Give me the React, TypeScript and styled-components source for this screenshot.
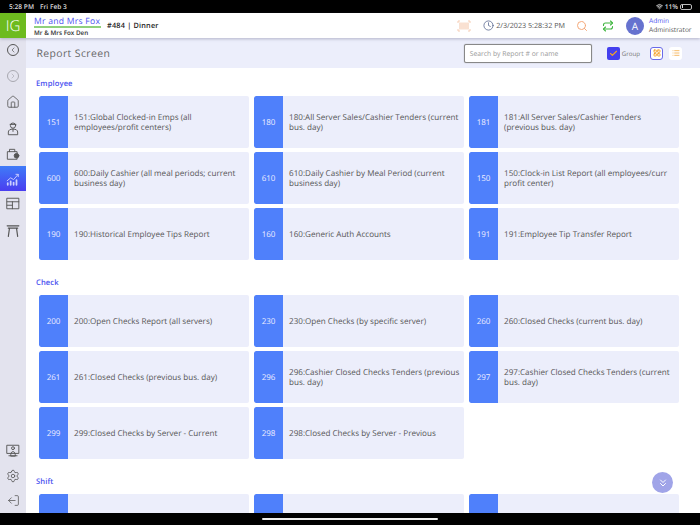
import React from "react";
import styled, { createGlobalStyle } from "styled-components";
import { ChevronsDown, Check as CheckIcon, Search, Repeat, Clock, Home, Settings, LogOut, ChevronLeft, ChevronRight, LayoutGrid, List, Wifi } from "lucide-react";

const Global = createGlobalStyle`
  html, body { margin: 0; padding: 0; width: 700px; height: 525px; overflow: hidden; background: #fff; }
  * { box-sizing: border-box; }
  body { font-family: "Open Sans", "Noto Sans", sans-serif; color: #555; text-rendering: geometricPrecision; }
`;
const Page = styled.div`
  position: relative; width: 700px; height: 525px; display: flex; flex-direction: column; overflow: hidden;
`;
const StatusBar = styled.div`
  height: 13px; flex: none; background: #000; color: #ddd; font-size: 6.6px; display: flex; align-items: center;
  padding: 0 8px 0 9px; font-weight: 600;
`;
const StatusTime = styled.span`margin-right: 6px;`;
const StatusRight = styled.div`margin-left: auto; display: flex; align-items: center; gap: 2px;`;
const Battery = styled.span`
  width: 12px; height: 6px; border: 1px solid #bbb; border-radius: 2px; display: block; padding: 0.5px;
  &::before { content: ""; display: block; width: 1.5px; height: 100%; background: #ddd; }
`;
const Header = styled.header`
  height: 25px; flex: none; background: #fff; display: flex; align-items: center; position: relative; z-index: 2;
  box-shadow: 0 1px 3px rgba(70,70,110,.35);
`;
const Logo = styled.div`
  width: 26px; height: 25px; background: #6dbb1f; color: #fff; font-size: 15px; font-weight: 300; display: flex; align-items: center; justify-content: center;
`;
const Brand = styled.div`width: 67px; margin-left: 8px; display: flex; flex-direction: column;`;
const BrandName = styled.div`
  color: #4b52f0; font-size: 8.6px; line-height: 10px; letter-spacing: .25px; border-bottom: 2px solid #8fd07c; white-space: nowrap;
`;
const BrandSub = styled.div`color: #333; font-size: 6.3px; line-height: 7px; font-weight: 600; white-space: nowrap; margin-top: 1px;`;
const OrderInfo = styled.div`margin-left: 6px; color: #222; font-size: 7.3px; font-weight: 600; letter-spacing: .2px;`;
const HeaderRight = styled.div`margin-left: auto; display: flex; align-items: center; height: 100%;`;
const DateText = styled.span`color: #555; font-size: 7.2px; margin-left: 2px; white-space: nowrap;`;
const DateBlock = styled.div`display: flex; align-items: center; margin-left: 12px; color: #4a5a86;`;
const SearchSlot = styled.div`display: flex; margin-left: 11px; color: #f5a878;`;
const SyncSlot = styled.div`display: flex; margin-left: 14px; color: #3fb53f;`;
const Avatar = styled.div`
  width: 18px; height: 18px; border-radius: 50%; background: #6672cf; color: #fff; font-size: 10px; display: flex; align-items: center; justify-content: center; margin-left: 12px;
`;
const User = styled.div`margin: 0 8px 0 5px; width: 43px;`;
const UserName = styled.div`color: #4b52f0; font-size: 6.6px; line-height: 8px;`;
const UserRole = styled.div`color: #555; font-size: 6.6px; line-height: 9px;`;
const Body = styled.div`flex: 1; display: flex; min-height: 0;`;
const Sidebar = styled.nav`
  width: 26px; flex: none; background: #e3e3ee; display: flex; flex-direction: column; align-items: center;
`;
const NavSlot = styled.div<{ $h: number; $active?: boolean; $dim?: boolean }>`
  width: 26px; height: ${p => p.$h}px; flex: none; display: flex; align-items: center; justify-content: center;
  color: ${p => p.$active ? "#cdd0ff" : p.$dim ? "#a8a8b0" : "#555"};
  background: ${p => p.$active ? "linear-gradient(#3f7cf8,#4a3df0)" : "transparent"};
`;
const NavSpacer = styled.div`flex: 1;`;
const Round = styled.div`
  width: 12px; height: 12px; border-radius: 50%; border: 1px solid currentColor; display: flex; align-items: center; justify-content: center;
`;
const Main = styled.main`flex: 1; min-width: 0; display: flex; flex-direction: column; position: relative;`;
const TitleBar = styled.div`
  height: 30px; flex: none; background: #eceefb; display: flex; align-items: center; padding: 0 18px 0 10.5px;
`;
const Title = styled.h1`margin: 2px 0 0; font-size: 10.4px; font-weight: 400; color: #666; letter-spacing: .4px;`;
const SearchBox = styled.div`
  margin-left: auto; width: 128px; height: 19px; border: 1px solid #888; border-radius: 2px; background: #fff; color: #999; font-size: 6.8px;
  display: flex; align-items: center; padding-left: 5px; box-shadow: 0 0 1px #888;
`;
const GroupCheck = styled.div`
  width: 13px; height: 13px; margin-left: 15px; background: #443fee; border-radius: 2px; color: #f5a623; display: flex; align-items: center; justify-content: center;
`;
const GroupLabel = styled.span`color: #777; font-size: 6.2px; margin-left: 2px;`;
const ViewBtn = styled.div<{ $on?: boolean }>`
  width: 13px; height: 13px; border-radius: 3px; background: #fff; color: #f39a1e; display: flex; align-items: center; justify-content: center;
  border: ${p => p.$on ? "1px solid #6a6ae8" : "0"};
`;
const ViewGrid = styled.div`display: flex; gap: 6px; margin-left: 10px;`;
const Content = styled.div`flex: 1; min-height: 0; overflow: hidden; padding: 9px 21px 0 13px;`;
const SectionTitle = styled.h2`
  margin: 0 0 7px -3px; height: 12px; line-height: 14px; font-size: 7.6px; font-weight: 600; color: #4b52f0; letter-spacing: .1px;
`;
const CardGrid = styled.div`
  display: grid; grid-template-columns: repeat(3, 210px); grid-auto-rows: 52px; gap: 4px 5px; margin-bottom: 16px;
`;
const Card = styled.div`
  display: flex; background: #eceefb; border-radius: 2px; overflow: hidden;
`;
const CardNum = styled.div`
  width: 29px; flex: none; background: #4f80fb; color: #eef; font-size: 8px; display: flex; align-items: center; justify-content: center; border-radius: 2px 0 0 2px;
`;
const CardText = styled.div`
  flex: 1; display: flex; align-items: center; padding: 2px 1px 0 6px; font-size: 8.1px; line-height: 10px; color: #555;
`;
const Fab = styled.div`
  position: absolute; right: 27px; bottom: 20px; width: 21px; height: 21px; border-radius: 50%; background: #a0a4e8; color: #fff;
  display: flex; align-items: center; justify-content: center;
`;
const BottomBar = styled.div`height: 12px; flex: none; background: #000; display: flex; justify-content: center; align-items: flex-start; padding-top: 5px;`;
const HomeIndicator = styled.div`width: 176px; height: 2px; border-radius: 1px; background: #eee;`;

const Employee: [string, string][] = [
  ["151", "151:Global Clocked-in Emps (all employees/profit centers)"],
  ["180", "180:All Server Sales/Cashier Tenders (current bus. day)"],
  ["181", "181:All Server Sales/Cashier Tenders (previous bus. day)"],
  ["600", "600:Daily Cashier (all meal periods; current business day)"],
  ["610", "610:Daily Cashier by Meal Period (current business day)"],
  ["150", "150:Clock-in List Report (all employees/curr profit center)"],
  ["190", "190:Historical Employee Tips Report"],
  ["160", "160:Generic Auth Accounts"],
  ["191", "191:Employee Tip Transfer Report"],
];
const Checks: [string, string][] = [
  ["200", "200:Open Checks Report (all servers)"],
  ["230", "230:Open Checks (by specific server)"],
  ["260", "260:Closed Checks (current bus. day)"],
  ["261", "261:Closed Checks (previous bus. day)"],
  ["296", "296:Cashier Closed Checks Tenders (previous bus. day)"],
  ["297", "297:Cashier Closed Checks Tenders (current bus. day)"],
  ["299", "299:Closed Checks by Server - Current"],
  ["298", "298:Closed Checks by Server - Previous"],
];
const Shift: [string, string][] = [["", ""], ["", ""], ["", ""]];

const Cards = ({ items }: { items: [string, string][] }) => (
  <CardGrid>
    {items.map((c, i) => (
      <Card key={i}>
        <CardNum>{c[0]}</CardNum>
        <CardText>{c[1]}</CardText>
      </Card>
    ))}
  </CardGrid>
);

const S = { fill: "none", stroke: "currentColor", strokeWidth: 1.6, strokeLinecap: "round", strokeLinejoin: "round" } as const;

export default function App() {
  return (
    <Page>
      <Global />
      <StatusBar>
        <StatusTime>5:28 PM</StatusTime><span>Fri Feb 3</span>
        <StatusRight><Wifi size={7} color="#ddd" strokeWidth={3} /><span>11%</span><Battery /></StatusRight>
      </StatusBar>
      <Header>
        <Logo>IG</Logo>
        <Brand>
          <BrandName>Mr and Mrs Fox</BrandName>
          <BrandSub>Mr &amp; Mrs Fox Den</BrandSub>
        </Brand>
        <OrderInfo>#484 | Dinner</OrderInfo>
        <HeaderRight>
          <svg width="14" height="12" viewBox="0 0 14 12" fill="none" stroke="#f6cdb4" strokeWidth="1">
            <path d="M1 3V1h2M11 1h2v2M13 9v2h-2M3 11H1V9" />
            <path d="M3 2.5v7M5 2.5v7M7 2.5v7M9 2.5v7M11 2.5v7" strokeWidth="1.2" />
          </svg>
          <DateBlock><Clock size={11} strokeWidth={1.6} /><DateText>2/3/2023 5:28:32 PM</DateText></DateBlock>
          <SearchSlot><Search size={12} strokeWidth={2} /></SearchSlot>
          <SyncSlot><Repeat size={12} strokeWidth={2.2} /></SyncSlot>
          <Avatar>A</Avatar>
          <User><UserName>Admin</UserName><UserRole>Administrator</UserRole></User>
        </HeaderRight>
      </Header>
      <Body>
        <Sidebar>
          <NavSlot $h={24}><Round><ChevronLeft size={8} /></Round></NavSlot>
          <NavSlot $h={28} $dim><Round><ChevronRight size={8} /></Round></NavSlot>
          <NavSlot $h={24}><Home size={14} strokeWidth={1.4} /></NavSlot>
          <NavSlot $h={28}>
            <svg width="14" height="15" viewBox="0 0 24 24" {...S}><circle cx="12" cy="7" r="4.5" /><path d="M7 5h10M4 22v-4c0-3 3-5 8-5s8 2 8 5v4zM12 13v4" /></svg>
          </NavSlot>
          <NavSlot $h={24}>
            <svg width="14" height="14" viewBox="0 0 24 24" {...S}><path d="M3 8h16v13H3zM6 8V4h9v4" /><circle cx="18" cy="15" r="4" fill="#555" /></svg>
          </NavSlot>
          <NavSlot $h={25} $active>
            <svg width="14" height="14" viewBox="0 0 24 24" {...S}><path d="M2 15l6-5 5 3 8-9M17 4h4v4" /><path d="M3 22v-3M8 22v-6M13 22v-4M18 22v-8" strokeWidth="3" /></svg>
          </NavSlot>
          <NavSlot $h={25}>
            <svg width="14" height="13" viewBox="0 0 24 22" {...S}><rect x="2" y="2" width="20" height="18" /><path d="M2 8h20M2 14h9M11 8v12" /></svg>
          </NavSlot>
          <NavSlot $h={28}>
            <svg width="14" height="13" viewBox="0 0 24 22" {...S} strokeWidth={2}><path d="M2 3h20M4 7h16M6 7l-2 14M18 7l2 14" /></svg>
          </NavSlot>
          <NavSpacer />
          <NavSlot $h={26}>
            <svg width="14" height="13" viewBox="0 0 24 22" {...S}><rect x="2" y="2" width="20" height="14" /><circle cx="12" cy="7" r="2.5" /><path d="M8 20c0-4 1-7 4-7s4 3 4 7zM5 20h14" /></svg>
          </NavSlot>
          <NavSlot $h={25}><Settings size={14} strokeWidth={1.4} /></NavSlot>
          <NavSlot $h={25}><LogOut size={13} strokeWidth={1.4} style={{ transform: "scaleX(-1)" }} /></NavSlot>
        </Sidebar>
        <Main>
          <TitleBar>
            <Title>Report Screen</Title>
            <SearchBox>Search by Report # or name</SearchBox>
            <GroupCheck><CheckIcon size={9} strokeWidth={3} /></GroupCheck>
            <GroupLabel>Group</GroupLabel>
            <ViewGrid>
              <ViewBtn $on><LayoutGrid size={8} strokeWidth={2.5} /></ViewBtn>
              <ViewBtn><List size={8} strokeWidth={2} /></ViewBtn>
            </ViewGrid>
          </TitleBar>
          <Content>
            <SectionTitle>Employee</SectionTitle>
            <Cards items={Employee} />
            <SectionTitle>Check</SectionTitle>
            <Cards items={Checks} />
            <SectionTitle>Shift</SectionTitle>
            <Cards items={Shift} />
          </Content>
          <Fab><ChevronsDown size={12} strokeWidth={2} /></Fab>
        </Main>
      </Body>
      <BottomBar><HomeIndicator /></BottomBar>
    </Page>
  );
}
